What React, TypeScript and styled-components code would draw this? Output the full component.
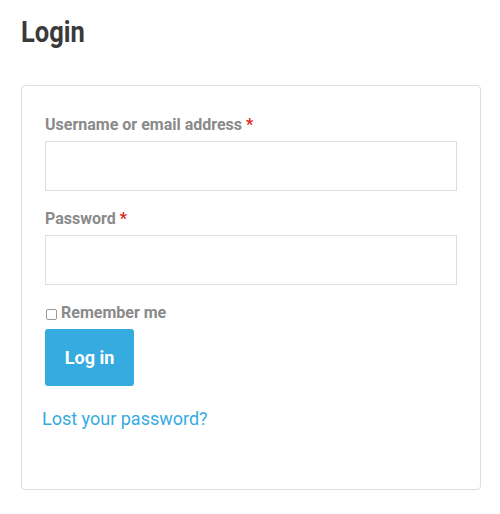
import React from "react";
import styled, { createGlobalStyle } from "styled-components";

const GlobalStyle = createGlobalStyle`
  * {
    box-sizing: border-box;
  }
  body {
    margin: 0;
    background: #fff;
    font-family: Roboto, "Liberation Sans", sans-serif;
  }
`;

const Page = styled.div`
  padding: 14px 19px 0 21px;
`;

const Title = styled.h1`
  margin: 0 0 35px;
  font-size: 30px;
  line-height: 36px;
  font-weight: 700;
  color: #3a3a3a;
  display: inline-block;
  transform: scaleX(0.85);
  transform-origin: left center;
`;

const Card = styled.form`
  border: 1px solid #dddddd;
  border-radius: 4px;
  padding: 29px 23px 58px;
  display: flex;
  flex-direction: column;
`;

const Field = styled.div`
  display: flex;
  flex-direction: column;
  margin-bottom: 18px;
`;

const Label = styled.label`
  font-size: 16px;
  line-height: 20px;
  font-weight: 700;
  color: #8a8a8a;
  margin-bottom: 6px;
`;

const Required = styled.span`
  color: #e2231a;
  margin-left: 4px;
`;

const Input = styled.input`
  height: 50px;
  width: 100%;
  border: 1px solid #dddddd;
  border-radius: 0;
  padding: 0 12px;
  font-size: 16px;
  font-family: inherit;
  outline: none;

  &:focus {
    border-color: #36abe0;
  }
`;

const CheckRow = styled.label`
  display: flex;
  align-items: center;
  font-size: 16px;
  line-height: 20px;
  font-weight: 700;
  color: #8a8a8a;
  margin-bottom: 6px;
`;

const Checkbox = styled.input`
  appearance: none;
  width: 11px;
  height: 11px;
  margin: 2px 4px 0 1px;
  border: 1px solid #9a9a9a;
  border-radius: 2px;
  background: #fff;
`;

const Button = styled.button`
  align-self: flex-start;
  width: 89px;
  height: 57px;
  border: none;
  border-radius: 3px;
  background: #36abe0;
  color: #fff;
  font-family: inherit;
  font-size: 18px;
  font-weight: 700;
  cursor: pointer;
  margin-bottom: 21px;
`;

const Link = styled.a`
  font-size: 18px;
  line-height: 24px;
  color: #36abe0;
  text-decoration: none;
  margin-left: -3px;
  align-self: flex-start;
`;

export default function App() {
  return (
    <Page>
      <GlobalStyle />
      <Title>Login</Title>
      <Card onSubmit={(e) => e.preventDefault()}>
        <Field>
          <Label htmlFor="username">
            Username or email address<Required>*</Required>
          </Label>
          <Input id="username" type="text" />
        </Field>
        <Field>
          <Label htmlFor="password">
            Password<Required>*</Required>
          </Label>
          <Input id="password" type="password" />
        </Field>
        <CheckRow>
          <Checkbox type="checkbox" />
          Remember me
        </CheckRow>
        <Button type="submit">Log in</Button>
        <Link href="#">Lost your password?</Link>
      </Card>
    </Page>
  );
}
